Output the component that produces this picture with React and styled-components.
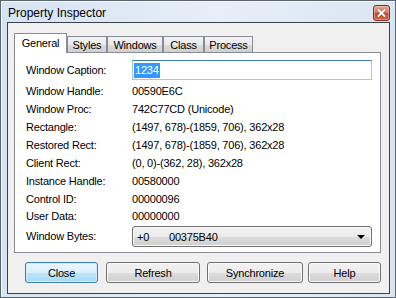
import React from 'react';
import styled, { createGlobalStyle } from 'styled-components';

const GlobalStyle = createGlobalStyle`
  html, body {
    margin: 0;
    padding: 0;
    background: #ffffff;
  }
  body {
    font-family: "Liberation Sans", Arial, sans-serif;
    font-size: 11px;
    color: #000;
  }
`;

const Window = styled.div`
  box-sizing: border-box;
  width: 396px;
  height: 298px;
  border: 1px solid #5c6470;
  background: linear-gradient(to right, #d6e3f2 0%, #e6eef8 55%, #dbe6f3 100%);
  box-shadow: inset 1px 1px 0 #f4f8fc;
  display: flex;
  flex-direction: column;
  padding: 0 5px 3px 6px;
`;

const TitleBar = styled.div`
  height: 21px;
  display: flex;
  align-items: center;
  justify-content: space-between;
`;

const TitleText = styled.span`
  font-size: 12px;
  padding-left: 1px;
  margin-top: 3px;
  color: #000;
`;

const CloseCap = styled.div`
  box-sizing: border-box;
  align-self: flex-start;
  width: 17px;
  height: 16px;
  margin-top: 4px;
  border: 1px solid #7a2c1c;
  border-radius: 3px;
  background: linear-gradient(to bottom, #e8a493 0%, #d9765c 45%, #c8452a 55%, #d2603e 100%);
  box-shadow: inset 0 0 0 1px rgba(255, 220, 210, 0.45);
  display: flex;
  align-items: center;
  justify-content: center;
`;

const Client = styled.div`
  flex: 1;
  box-sizing: border-box;
  border: 1px solid #39414c;
  background: #f0f0f0;
  padding: 10px 8px 0 6px;
  display: flex;
  flex-direction: column;
`;

const TabRow = styled.div`
  height: 20px;
  display: flex;
  align-items: flex-end;
  margin-bottom: -1px;
  position: relative;
  z-index: 1;
`;

const Tab = styled.div`
  box-sizing: border-box;
  width: ${(p) => p.$w}px;
  height: ${(p) => (p.$active ? 20 : 17)}px;
  border: 1px solid #898c95;
  border-bottom: ${(p) => (p.$active ? 'none' : '1px solid #898c95')};
  background: ${(p) =>
    p.$active ? '#ffffff' : 'linear-gradient(to bottom, #f3f3f3 0%, #ebebeb 50%, #dddddd 51%, #cfcfcf 100%)'};
  display: flex;
  align-items: center;
  justify-content: center;
  padding-top: ${(p) => (p.$active ? 0 : 1)}px;
  padding-bottom: ${(p) => (p.$active ? 1 : 0)}px;
  letter-spacing: -0.2px;
`;

const Panel = styled.div`
  box-sizing: border-box;
  height: 201px;
  border: 1px solid #898c95;
  background: #ffffff;
  padding: 7px 8px 5px 11px;
  display: flex;
  flex-direction: column;
`;

const Row = styled.div`
  display: grid;
  grid-template-columns: 106px 1fr;
  align-items: center;
  height: ${(p) => p.$h}px;
  margin-top: ${(p) => p.$mt || 0}px;
  letter-spacing: -0.2px;
  white-space: nowrap;
`;

const Label = styled.span`
  line-height: 13px;
`;

const Value = styled.span`
  line-height: 13px;
`;

const EditBox = styled.div`
  box-sizing: border-box;
  height: 20px;
  border: 1px solid #a4c9e3;
  border-top-color: #3d7bad;
  background: #fff;
  display: flex;
  align-items: center;
  padding-left: 1px;
`;

const Selected = styled.span`
  background: #3399ff;
  color: #fff;
  line-height: 15px;
  padding: 0 1px;
`;

const Combo = styled.div`
  box-sizing: border-box;
  height: 21px;
  border: 1px solid #707070;
  border-radius: 3px;
  background: linear-gradient(to bottom, #f2f2f2 0%, #ebebeb 50%, #dddddd 51%, #cfcfcf 100%);
  box-shadow: inset 0 0 0 1px #fbfbfb;
  display: flex;
  align-items: center;
  padding: 0 6px 0 4px;
`;

const ComboCell = styled.span`
  width: ${(p) => p.$w}px;
`;

const ComboArrow = styled.span`
  margin-left: auto;
  width: 0;
  height: 0;
  border-left: 4px solid transparent;
  border-right: 4px solid transparent;
  border-top: 4px solid #000;
  margin-top: 1px;
`;

const ButtonRow = styled.div`
  display: flex;
  margin-top: 9px;
  padding-left: 11px;
`;

const Button = styled.div`
  box-sizing: border-box;
  width: ${(p) => p.$w}px;
  height: 21px;
  margin-left: ${(p) => p.$ml || 0}px;
  border: 1px solid ${(p) => (p.$default ? '#3c7fb1' : '#707070')};
  border-radius: 3px;
  background: ${(p) =>
    p.$default
      ? 'linear-gradient(to bottom, #eaf6fd 0%, #d9f0fc 50%, #bee6fd 51%, #a7d9f5 100%)'
      : 'linear-gradient(to bottom, #f2f2f2 0%, #ebebeb 50%, #dddddd 51%, #cfcfcf 100%)'};
  box-shadow: inset 0 0 0 1px ${(p) => (p.$default ? '#d2ecfb' : '#fbfbfb')};
  display: flex;
  align-items: center;
  justify-content: center;
  letter-spacing: -0.2px;
`;

const tabs = [
  { name: 'General', w: 53, active: true },
  { name: 'Styles', w: 40 },
  { name: 'Windows', w: 56 },
  { name: 'Class', w: 41 },
  { name: 'Process', w: 49 },
];

const fields = [
  ['Window Handle:', '00590E6C', 18],
  ['Window Proc:', '742C77CD (Unicode)', 18],
  ['Rectangle:', '(1497, 678)-(1859, 706), 362x28', 18],
  ['Restored Rect:', '(1497, 678)-(1859, 706), 362x28', 18],
  ['Client Rect:', '(0, 0)-(362, 28), 362x28', 18],
  ['Instance Handle:', '00580000', 18],
  ['Control ID:', '00000096', 18],
  ['User Data:', '00000000', 16],
];

const buttons = [
  { label: 'Close', w: 73, ml: 0, def: true },
  { label: 'Refresh', w: 94, ml: 8 },
  { label: 'Synchronize', w: 96, ml: 7 },
  { label: 'Help', w: 73, ml: 5 },
];

export default function App() {
  return (
    <>
      <GlobalStyle />
      <Window>
        <TitleBar>
          <TitleText>Property Inspector</TitleText>
          <CloseCap>
            <svg width="9" height="8" viewBox="0 0 9 8">
              <path d="M1.5 1 L7.5 7 M7.5 1 L1.5 7" stroke="#5a1a10" strokeWidth="3" strokeLinecap="square" opacity="0.5" />
              <path d="M1.5 1 L7.5 7 M7.5 1 L1.5 7" stroke="#ffffff" strokeWidth="2" strokeLinecap="square" />
            </svg>
          </CloseCap>
        </TitleBar>
        <Client>
          <TabRow>
            {tabs.map((t) => (
              <Tab key={t.name} $w={t.w} $active={t.active}>
                {t.name}
              </Tab>
            ))}
          </TabRow>
          <Panel>
            <Row $h={20}>
              <Label>Window Caption:</Label>
              <EditBox>
                <Selected>1234</Selected>
              </EditBox>
            </Row>
            {fields.map(([label, value, h], i) => (
              <Row key={label} $h={h} $mt={i === 0 ? 2 : 0}>
                <Label>{label}</Label>
                <Value>{value}</Value>
              </Row>
            ))}
            <Row $h={21} $mt={2}>
              <Label>Window Bytes:</Label>
              <Combo>
                <ComboCell $w={32}>+0</ComboCell>
                <ComboCell $w={80}>00375B40</ComboCell>
                <ComboArrow />
              </Combo>
            </Row>
          </Panel>
          <ButtonRow>
            {buttons.map((b) => (
              <Button key={b.label} $w={b.w} $ml={b.ml} $default={b.def}>
                {b.label}
              </Button>
            ))}
          </ButtonRow>
        </Client>
      </Window>
    </>
  );
}
